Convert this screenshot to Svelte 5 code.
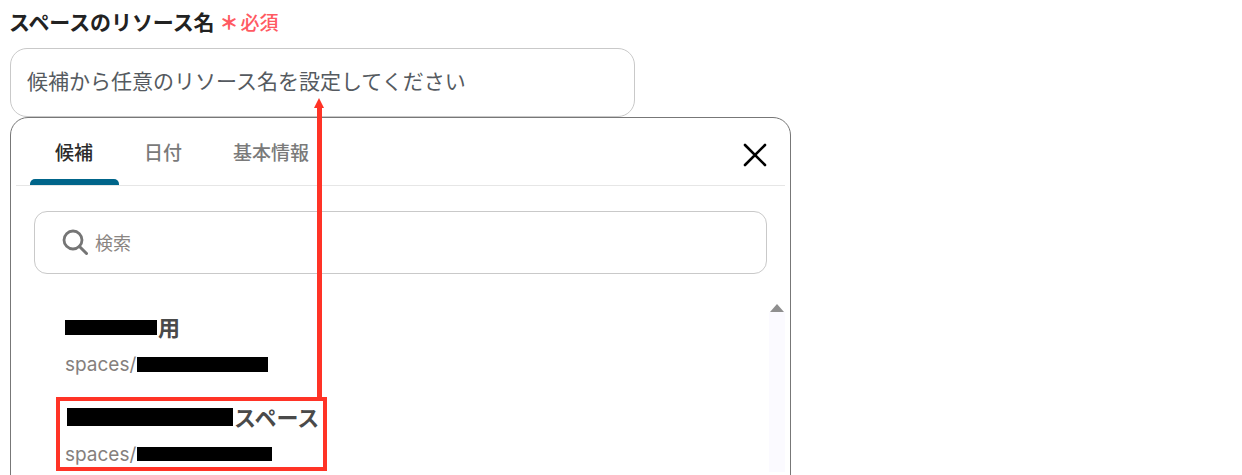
<script lang="ts">
    const tabs=['候補','日付','基本情報'];
    const items=[
        {offset:0,black:92,black_h:15,suffix:'用',path_black:131,path_h:15},
        {offset:2,black:166,black_h:18,suffix:'スペース',path_black:135,path_h:14}
    ];
</script>

<div class="page">
    <div class="field-label">
        <span class="label-text">スペースのリソース名</span>
        <span class="required"><span class="star">＊</span>必須</span>
    </div>

    <div class="text-input"><span>候補から任意のリソース名を設定してください</span></div>

    <div class="panel">
        <div class="tab-row">
            <div class="tabs">
                {#each tabs as tab,t (t)}
                    <div class="tab" class:active={t==0}>{tab}</div>
                {/each}
            </div>
            <button class="close" aria-label="閉じる">
                <svg width="24" height="24" viewBox="0 0 24 24">
                    <path d="M2 2L22 22M22 2L2 22" stroke="#000" stroke-width="2.6" fill="none" stroke-linecap="round"/>
                </svg>
            </button>
        </div>

        <div class="search">
            <svg width="26" height="26" viewBox="0 0 26 26">
                <circle cx="11" cy="11" r="9" stroke="#757575" stroke-width="2.8" fill="none"/>
                <path d="M17.5 17.5L24.5 24.5" stroke="#757575" stroke-width="3" fill="none" stroke-linecap="round"/>
            </svg>
            <span class="search-text">検索</span>
        </div>

        <div class="list">
            <div class="items">
                {#each items as item,i (i)}
                    <div class="item">
                        <div class="item-title"><span class="redact" style="width:{item.black}px;height:{item.black_h}px;margin-left:{item.offset}px"></span><span class="suffix">{item.suffix}</span></div>
                        <div class="item-path">spaces/<span class="redact path-redact" style="width:{item.path_black}px;height:{item.path_h}px"></span></div>
                    </div>
                {/each}
            </div>
            <div class="scrollbar">
                <div class="arrow"></div>
                <div class="track"></div>
            </div>
        </div>
    </div>

    <!-- annotation drawn over the screenshot -->
    <div class="mark-box"></div>
    <div class="mark-line"></div>
    <div class="mark-head"></div>
</div>

<style>
    :global(body){
        margin:0;
        background:#fff;
    }

    .page{
        position:relative;
        width:1242px;
        height:475px;
        overflow:hidden;
        box-sizing:border-box;
        padding:8px 0 0 10px;
        font-family:"Noto Sans CJK JP","Noto Sans",sans-serif;
        color:#333;
    }

    .field-label{
        display:flex;
        align-items:center;
        height:26px;
        gap:5px;
        margin-bottom:14px;
    }

    .label-text{
        font-size:21px;
        font-weight:700;
        letter-spacing:-0.1px;
        margin-left:-1px;
        color:#222;
    }

    .required{
        display:flex;
        align-items:center;
        font-size:19px;
        font-weight:500;
        color:#ff5a62;
    }

    .star{
        font-size:19px;
        font-weight:900;
        width:21px;
    }

    .text-input{
        box-sizing:border-box;
        width:625px;
        height:69px;
        border:1px solid #c9c9c9;
        border-radius:17px;
        padding:0 0 6px 16px;
        display:flex;
        align-items:center;
        font-size:21px;
        color:#555a60;
    }

    .panel{
        box-sizing:border-box;
        width:781px;
        height:400px;
        border:1px solid #777;
        border-radius:18px;
        background:#fff;
    }

    .tab-row{
        display:flex;
        justify-content:space-between;
        align-items:flex-start;
        height:67px;
        margin:0 5px;
        border-bottom:1px solid #e6e6e6;
    }

    .tabs{
        display:flex;
        padding-left:14px;
    }

    .tab{
        box-sizing:border-box;
        height:67px;
        padding:21px 0 0 25px;
        font-size:19px;
        line-height:26px;
        font-weight:500;
        color:#7a7a7a;
        position:relative;
    }

    .tab:nth-child(3){
        padding-left:51px;
    }

    .tab.active{
        color:#2b2b2b;
        width:89px;
    }

    .tab.active::after{
        content:'';
        position:absolute;
        left:0;
        right:0;
        bottom:0;
        height:6px;
        background:#00658a;
        border-radius:5px 5px 0 0;
    }

    .close{
        all:unset;
        display:block;
        margin:25px 18px 0 0;
        width:24px;
        height:24px;
        line-height:0;
    }

    .search{
        box-sizing:border-box;
        width:733px;
        height:63px;
        margin:25px 0 0 23px;
        border:1px solid #c9c9c9;
        border-radius:13px;
        display:flex;
        align-items:center;
        padding:0 0 2px 27px;
        gap:7px;
    }

    .search-text{
        font-size:18px;
        color:#8a8582;
    }

    .list{
        display:flex;
        justify-content:space-between;
        margin-top:24px;
    }

    .items{
        padding:12px 0 0 54px;
    }

    .item{
        height:90px;
    }

    .item-title{
        display:flex;
        align-items:center;
        height:34px;
        margin-bottom:2px;
        font-size:22px;
        font-weight:700;
        color:#4a4a4a;
    }

    .suffix{
        margin:0 0 2px 1px;
    }

    .item-path{
        display:flex;
        align-items:center;
        height:36px;
        font-family:Inter,"Noto Sans",sans-serif;
        font-size:19px;
        color:#85807d;
    }

    .redact{
        display:inline-block;
        background:#000;
    }

    .path-redact{
        margin-left:1px;
    }

    .scrollbar{
        width:16px;
        margin-right:5px;
        padding-top:6px;
    }

    .arrow{
        width:0;
        height:0;
        margin:0 auto;
        border-left:7px solid transparent;
        border-right:7px solid transparent;
        border-bottom:8px solid #8f8f8f;
    }

    .track{
        height:160px;
        background:#fbfaff;
    }

    .mark-box{
        position:absolute;
        left:56px;
        top:397px;
        width:263px;
        height:66px;
        border:4px solid #ff3326;
    }

    .mark-line{
        position:absolute;
        left:317px;
        top:106px;
        width:5px;
        height:292px;
        background:#ff3326;
    }

    .mark-head{
        position:absolute;
        left:314px;
        top:98px;
        width:0;
        height:0;
        border-left:5.5px solid transparent;
        border-right:5.5px solid transparent;
        border-bottom:10px solid #ff3326;
    }
</style>
